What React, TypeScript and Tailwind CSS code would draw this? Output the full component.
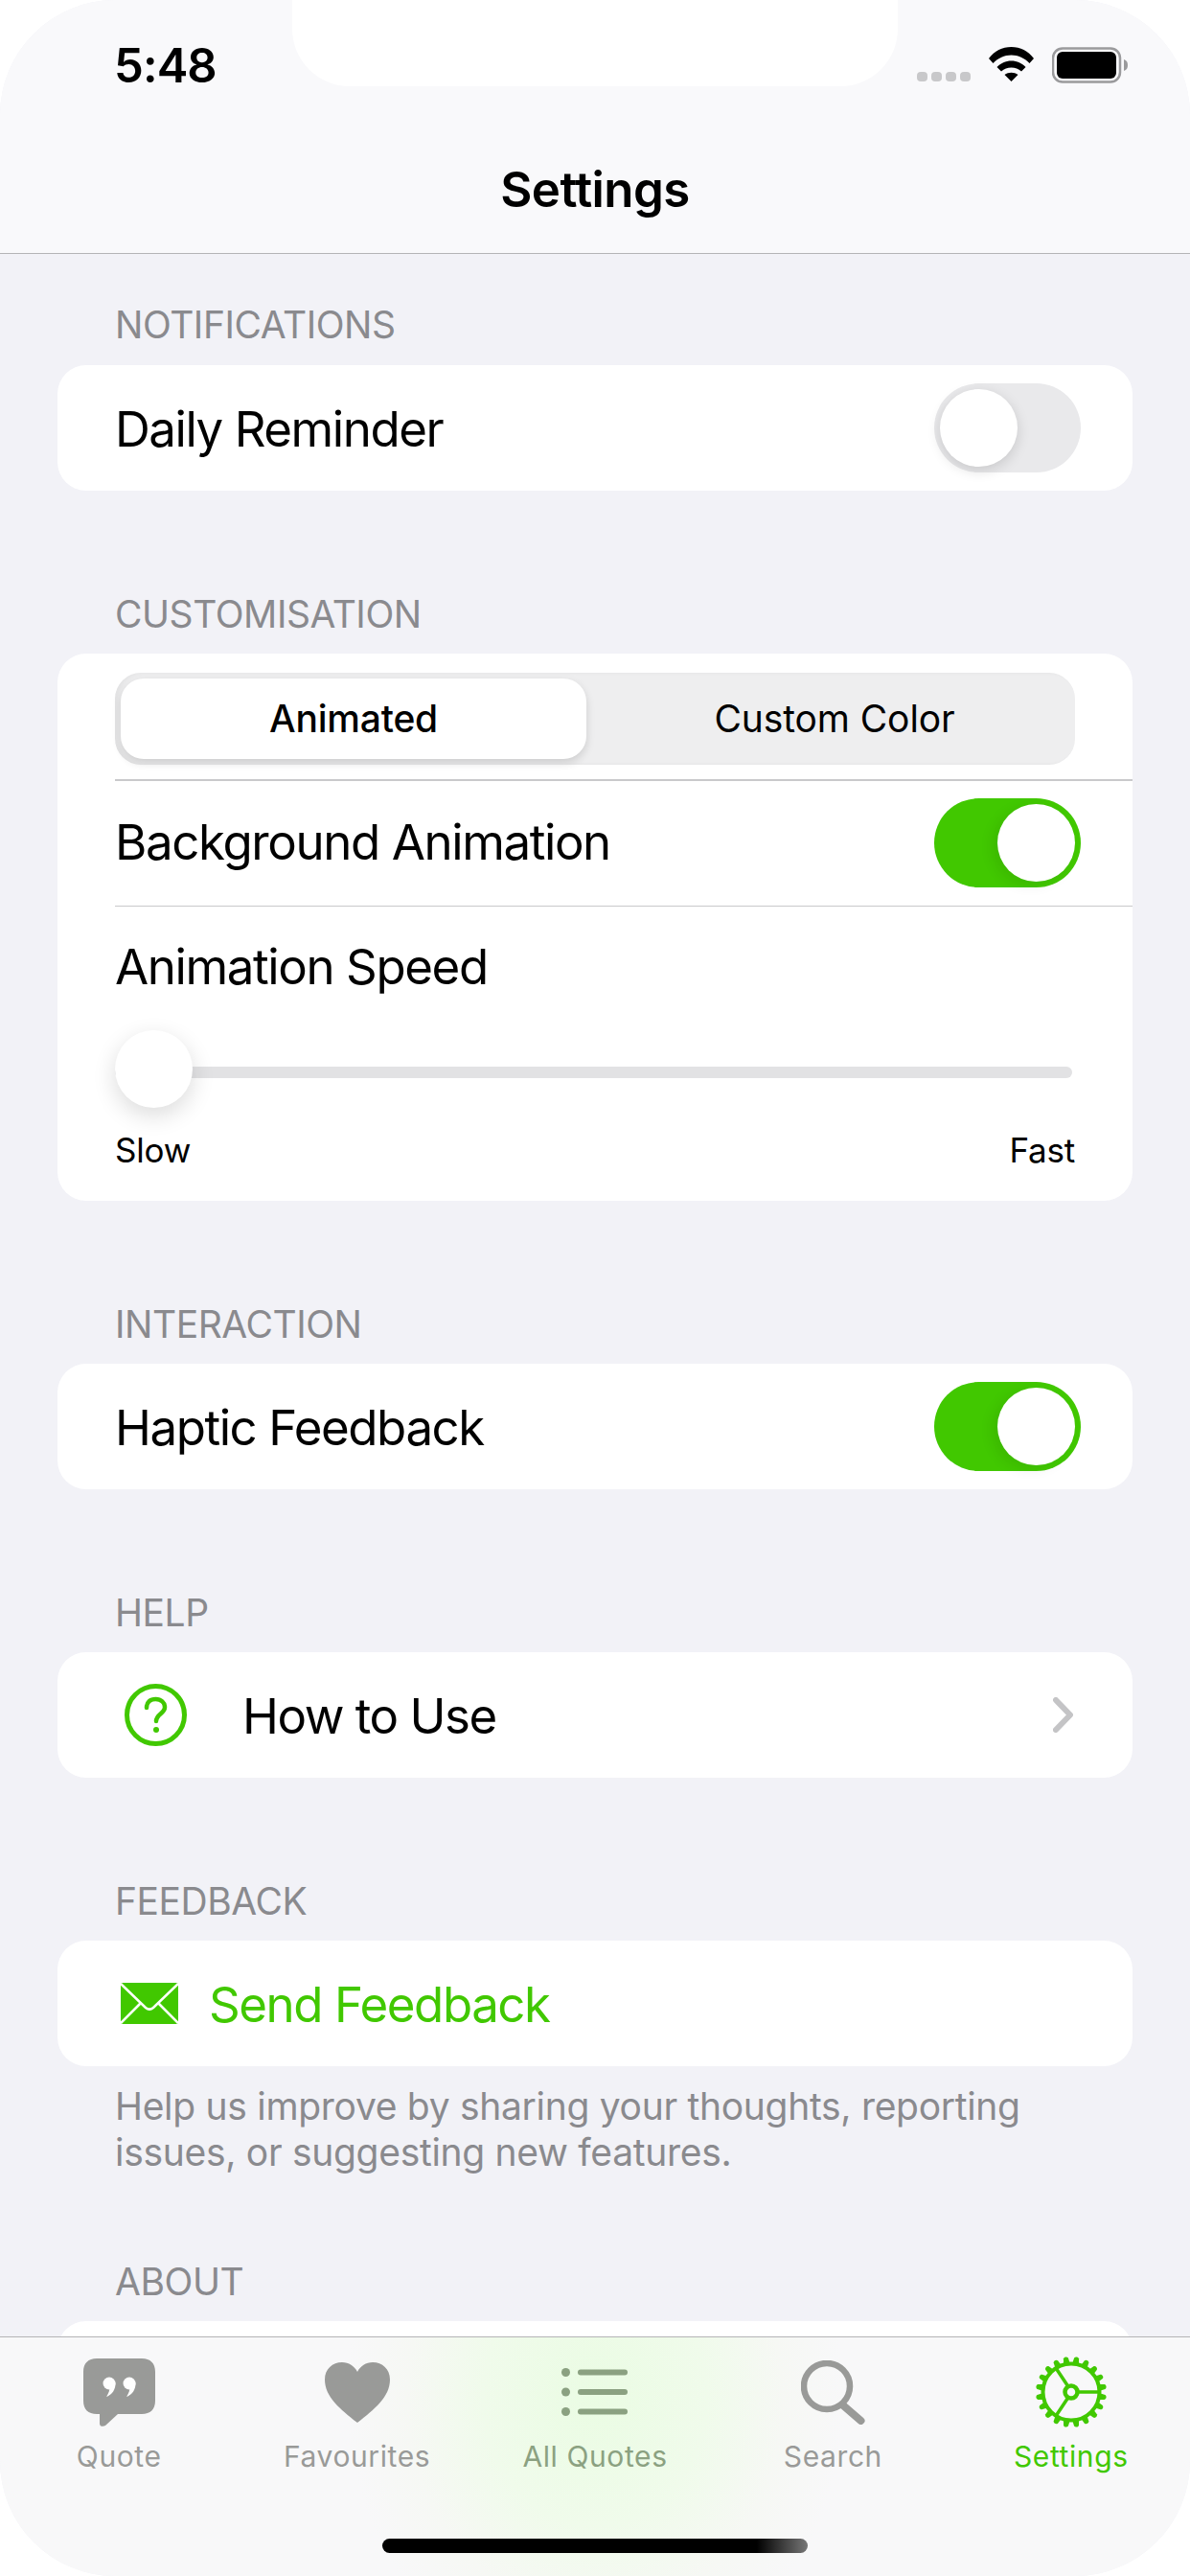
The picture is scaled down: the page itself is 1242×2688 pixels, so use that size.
const GREEN = '#41c800';

function Toggle({ on }: { on: boolean }) {
  return (
    <div className={`flex h-[93px] w-[153px] items-center rounded-full px-[6px] ${on ? 'justify-end bg-[#41c800]' : 'justify-start bg-[#e9e9eb]'}`}>
      <div className={`h-[81px] w-[81px] rounded-full bg-white ${on ? 'shadow-[-6px_4px_14px_rgba(0,0,0,0.08)]' : 'shadow-[0_4px_14px_rgba(0,0,0,0.14)]'}`} />
    </div>
  );
}

function Section({ title, children, className }: { title: string; children: React.ReactNode; className?: string }) {
  return (
    <section className={className}>
      <h3 className="mb-[18px] h-[48px] px-[120px] pt-[1px] text-[39px] leading-[48px] font-normal tracking-[-0.45px] text-[#8a8a8e]">{title}</h3>
      {children}
    </section>
  );
}

function Card({ children, className }: { children: React.ReactNode; className?: string }) {
  return <div className={`mx-[60px] rounded-[30px] bg-white ${className ?? ''}`}>{children}</div>;
}

function SimpleRow({ label, on }: { label: string; on: boolean }) {
  return (
    <Card className="flex h-[131px] items-center justify-between pr-[54px] pl-[60px]">
      <span className="pt-[3px] text-[51px] tracking-[-1.45px] text-black">{label}</span>
      <Toggle on={on} />
    </Card>
  );
}

function Wifi() {
  return (
    <svg viewBox="0 0 47 36" className="h-[36px] w-[47px]" fill="#000">
      <path d="M0 12 C6 4 14 0 23.5 0 C33 0 41 4 47 12 L42.5 17 C37 11.5 31 8.5 23.5 8.5 C16 8.5 10 11.5 4.5 17 Z" />
      <path d="M8.5 21 C12.5 17 17.5 14.5 23.5 14.5 C29.5 14.5 34.5 17 38.5 21 L34 25.5 C31 22.8 27.5 21.5 23.5 21.5 C19.5 21.5 16 22.8 13 25.5 Z" />
      <path d="M16.5 29 C18.5 27.5 21 26.8 23.5 26.8 C26 26.8 28.5 27.5 30.5 29 L23.5 36 Z" />
    </svg>
  );
}

function Battery() {
  return (
    <svg viewBox="0 0 80 38" className="h-[38px] w-[80px]">
      <rect x="1" y="1.5" width="70" height="35" rx="10" fill="none" stroke="#9a9a9c" strokeWidth="2.5" />
      <rect x="5" y="5" width="62" height="28" rx="6" fill="#000" />
      <path d="M75 13 C78 14 79 16 79 19 C79 22 78 24 75 25 Z" fill="#9a9a9c" />
    </svg>
  );
}

function StatusBar() {
  return (
    <div className="flex h-[167px] items-start justify-between pt-[43px] pr-[64px] pl-[119px]">
      <span className="text-[49px] leading-[52px] font-semibold tracking-[-0.9px] text-black">5:48</span>
      <div className="flex items-start gap-[19px] pt-[6px]">
        <div className="mt-[26px] flex gap-[4px]">
          {[0, 1, 2, 3].map((i) => (
            <div key={i} className="h-[10px] w-[11px] rounded-[4px] bg-[#c8c8ca]" />
          ))}
        </div>
        <Wifi />
        <Battery />
      </div>
    </div>
  );
}

function AnimationCard() {
  return (
    <Card className="h-[571px] pt-[20px]">
      <div className="mx-[60px] flex h-[96px] rounded-[27px] bg-[#eeeeef] p-[6px] shadow-[inset_3px_0_4px_rgba(0,0,0,0.05)]">
        <div className="flex w-[486px] items-center justify-center rounded-[24px] bg-white text-[39px] font-medium tracking-[-0.2px] text-black shadow-[0_4px_10px_rgba(0,0,0,0.14)]">Animated</div>
        <div className="flex flex-1 items-center justify-center pl-[14px] text-[39px] font-normal tracking-[-0.1px] text-black">Custom Color</div>
      </div>
      <div className="mt-[15px] ml-[60px] h-[1.5px] bg-[#c9c9cb]" />
      <div className="ml-[60px] flex h-[131px] items-center justify-between border-b-[1.5px] border-[#c9c9cb] pr-[54px]">
        <span className="text-[51px] tracking-[-1.4px] text-black">Background Animation</span>
        <Toggle on />
      </div>
      <div className="px-[60px]">
        <div className="mt-[33px] text-[51px] leading-[60px] tracking-[-1.4px] text-black">Animation Speed</div>
        <div className="relative mt-[36px] h-[81px]">
          <div className="absolute top-[38px] right-[3px] left-0 h-[12px] rounded-full bg-[#e2e2e4]" />
          <div className="absolute top-0 left-0 h-[81px] w-[81px] rounded-full bg-white shadow-[0_8px_24px_rgba(0,0,0,0.14)]" />
        </div>
        <div className="mt-[22px] flex justify-between text-[35px] leading-[44px] tracking-[-0.2px] text-black">
          <span>Slow</span>
          <span>Fast</span>
        </div>
      </div>
    </Card>
  );
}

function QuoteIcon() {
  return (
    <svg viewBox="0 0 75 71" className="h-[71px] w-[75px]">
      <path d="M14 0 H61 C70 0 75 5 75 14 V44 C75 53 70 58 61 58 H36 L23 70 C20.500 71.500 17 71 17 68 V58 H14 C5 58 0 53 0 44 V14 C0 5 5 0 14 0 Z" fill="#999a98" />
      <circle cx="27" cy="26" r="6.500" fill="#fff" />
      <path d="M33.500 25 C34 32 30 38 24 40 C26.500 36 27.500 33 27.500 30 Z" fill="#fff" />
      <circle cx="48" cy="26" r="6.500" fill="#fff" />
      <path d="M54.500 25 C55 32 51 38 45 40 C47.500 36 48.500 33 48.500 30 Z" fill="#fff" />
    </svg>
  );
}

function HeartIcon() {
  return (
    <svg viewBox="0 0 68 63" className="h-[63px] w-[68px]">
      <path d="M34 63 C16 49 0 36 0 18 C0 7 8 0 18 0 C25 0 31 4 34 10 C37 4 43 0 50 0 C60 0 68 7 68 18 C68 36 52 49 34 63 Z" fill="#999a98" />
    </svg>
  );
}

function ListIcon() {
  return (
    <svg viewBox="0 0 69 50" className="h-[50px] w-[69px]" fill="#8ba181">
      {[4.5, 25, 45.5].map((y) => (
        <g key={y}>
          <circle cx="4.500" cy={y} r="4.500" />
          <rect x="17" y={y - 3} width="52" height="6" rx="3" />
        </g>
      ))}
    </svg>
  );
}

function SearchIcon() {
  return (
    <svg viewBox="0 0 67 67" className="h-[67px] w-[67px]" fill="none" stroke="#999a98">
      <circle cx="27" cy="27" r="24" strokeWidth="6.500" />
      <path d="M44 47 L62.500 63" strokeWidth="8" strokeLinecap="round" />
    </svg>
  );
}

function GearIcon() {
  const teeth = Array.from({ length: 20 }, (_, i) => 9 + i * 18);
  return (
    <svg viewBox="-38 -38 76 76" className="h-[76px] w-[76px]" fill="none" stroke={GREEN}>
      {teeth.map((a) => (
        <path key={a} d="M-3.500 -29 L-2.500 -35.500 C-1.500 -37.500 1.500 -37.500 2.500 -35.500 L3.500 -29 Z" fill={GREEN} stroke="none" transform={`rotate(${a})`} />
      ))}
      <circle r="29.500" strokeWidth="4" />
      <circle r="6.500" strokeWidth="4.500" />
      <path d="M8 0 H30 M-4 7 L-16 25 M-4 -7 L-16 -25" strokeWidth="3.500" />
    </svg>
  );
}

function TabItem({ label, color, children }: { label: string; color: string; children: React.ReactNode }) {
  return (
    <div className="flex flex-col items-center">
      <div className="flex h-[76px] items-center justify-center">{children}</div>
      <span className="mt-[11px] text-[30px] leading-[36px] font-normal tracking-[0.6px]" style={{ color }}>{label}</span>
    </div>
  );
}

function TabBar() {
  return (
    <div className="h-[250px] shrink-0 border-t-[1.5px] border-[#b4b4b6] bg-[radial-gradient(ellipse_260px_300px_at_50%_25%,#eafce3_0%,#f0fbeb_45%,#f6f8f4_75%,#f8f8f9_100%)] pt-[19px]">
      <div className="grid grid-cols-5">
        <TabItem label="Quote" color="#999a98"><QuoteIcon /></TabItem>
        <TabItem label="Favourites" color="#999a98"><HeartIcon /></TabItem>
        <TabItem label="All Quotes" color="#8ba181"><ListIcon /></TabItem>
        <TabItem label="Search" color="#999a98"><SearchIcon /></TabItem>
        <TabItem label="Settings" color={GREEN}><GearIcon /></TabItem>
      </div>
      <div className="mx-auto mt-[68px] h-[15px] w-[444px] rounded-full bg-[linear-gradient(90deg,#000_0%,#000_88%,#777_100%)]" />
    </div>
  );
}

export default function App() {
  return (
    <div className="h-[2688px] w-[1242px] bg-white font-['Inter',sans-serif]">
      <div className="relative flex h-full flex-col overflow-hidden rounded-[120px] bg-[#f2f2f7]">
        {/* notch */}
        <div className="absolute top-0 left-[305px] h-[90px] w-[632px] rounded-b-[60px] bg-white" />

        <header className="h-[265px] shrink-0 border-b-[1.5px] border-[#b4b4b6] bg-[#f9f9fb]">
          <StatusBar />
          <h1 className="text-center text-[51px] leading-[62px] font-semibold tracking-[-0.6px] text-black">Settings</h1>
        </header>

        <main className="flex-1 overflow-hidden pt-[49px]">
          <Section title="NOTIFICATIONS">
            <div className="h-[1px]" />
            <SimpleRow label="Daily Reminder" on={false} />
          </Section>

          <Section title="CUSTOMISATION" className="mt-[104px]">
            <AnimationCard />
          </Section>

          <Section title="INTERACTION" className="mt-[104px]">
            <SimpleRow label="Haptic Feedback" on />
          </Section>

          <Section title="HELP" className="mt-[104px]">
            <Card className="flex h-[131px] items-center pr-[62px] pl-[70px]">
              <svg viewBox="0 0 65 65" className="h-[65px] w-[65px]" fill="none" stroke={GREEN}>
                <circle cx="32.500" cy="32.500" r="30" strokeWidth="5" />
                <path d="M23 25 C23 19 27 16 32.500 16 C38 16 42 19.500 42 24.500 C42 31 33 31.500 33 39" strokeWidth="4.500" strokeLinecap="round" />
                <circle cx="33" cy="48" r="3" fill={GREEN} stroke="none" />
              </svg>
              <span className="ml-[58px] flex-1 pt-[3px] text-[51px] tracking-[-1.45px] text-black">How to Use</span>
              <svg viewBox="0 0 21 37" className="h-[37px] w-[21px]" fill="none" stroke="#c4c4c6" strokeWidth="6" strokeLinecap="round" strokeLinejoin="round">
                <path d="M3 3 L18 18.500 L3 34" />
              </svg>
            </Card>
          </Section>

          <Section title="FEEDBACK" className="mt-[104px]">
            <Card className="flex h-[131px] items-center pl-[66px]">
              <svg viewBox="0 0 60 43" className="h-[43px] w-[60px]">
                <rect width="60" height="43" rx="2" fill={GREEN} />
                <path d="M0 1 L26 26 C28.500 28 31.500 28 34 26 L60 1 M0 42 L20 22 M60 42 L40 22" fill="none" stroke="#fff" strokeWidth="2.500" />
              </svg>
              <span className="ml-[32px] pt-[3px] text-[51px] tracking-[-1.45px] text-[#41c800]">Send Feedback</span>
            </Card>
            <p className="mt-[18px] px-[120px] text-[39px] leading-[48px] tracking-[-0.3px] text-[#8a8a8e]">
              Help us improve by sharing your thoughts, reporting issues, or suggesting new features.
            </p>
          </Section>

          <Section title="ABOUT" className="mt-[86px]">
            <Card className="h-[300px]" />
          </Section>
        </main>

        <TabBar />
      </div>
    </div>
  );
}
